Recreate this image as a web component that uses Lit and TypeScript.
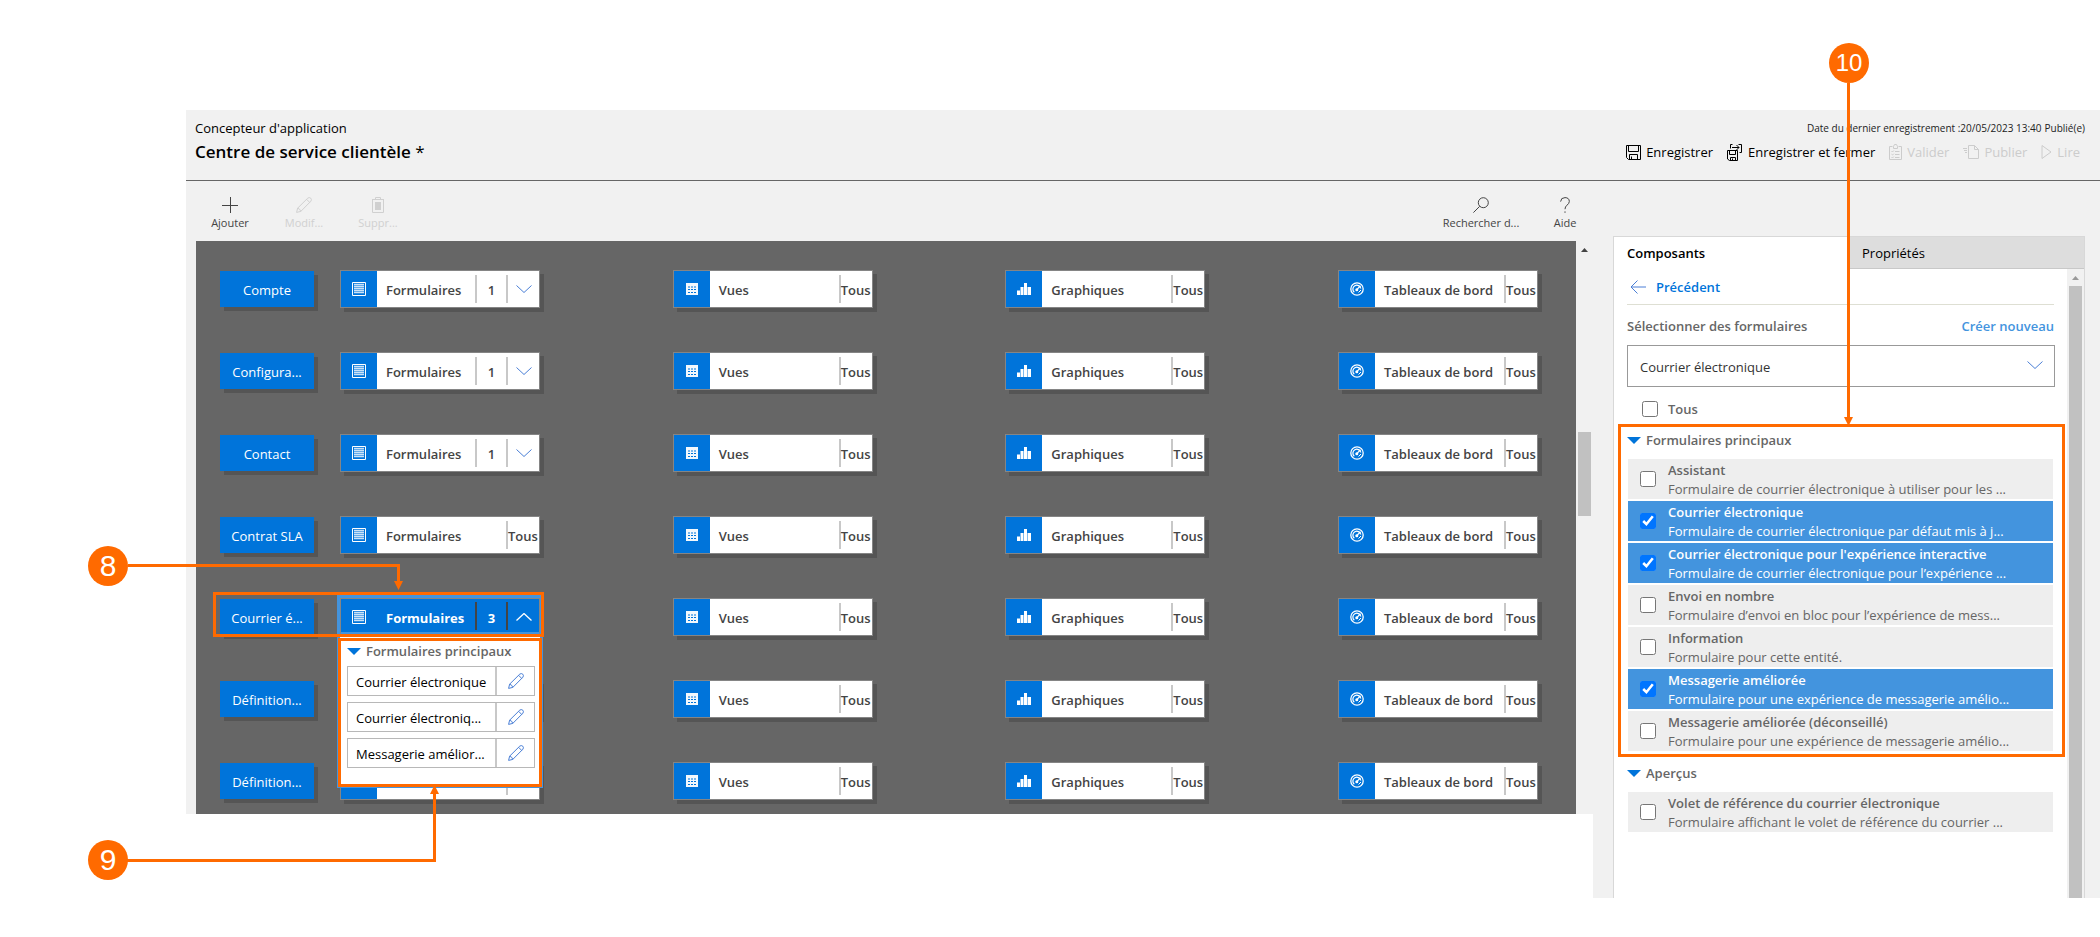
import { LitElement, html, svg, css, nothing } from "lit";
import { customElement } from "lit/decorators.js";
import { classMap } from "lit/directives/class-map.js";

const icon = (w: number, h: number, body: unknown) =>
  html`<svg width=${w} height=${h} viewBox="0 0 ${w} ${h}" fill="none" stroke="currentColor" aria-hidden="true">${body}</svg>`;

const icons = {
  plus: () => icon(16, 16, svg`<path d="M8.5 0V16M0 8.5H16"/>`),
  pencil: () => icon(16, 16, svg`<path d="M.6 15.4L1.6 11.2 11.8 1.1Q13.3 0 14.8 1.2 16 2.7 14.9 4.2L4.8 14.4ZM10.6 2.3L13.7 5.4M1.6 11.2Q4 11.6 4.8 14.4"/>`),
  trash: () => icon(16, 16, svg`<path d="M2 2.5H14M5.500 2.500V.5H10.500V2.500M2.500 2.500V15.500H13.500V2.500"/><path d="M5 5H11V13H5Z" fill="currentColor" stroke="none"/>`),
  search: () => icon(16, 16, svg`<circle cx="10.3" cy="5.7" r="5"/><path d="M6.7 9.3L.4 15.6"/>`),
  help: () => icon(16, 16, svg`<path d="M3.600 4.600Q3.800 .6 8 .6 12.300 .7 12.300 4.500 12.200 6.500 10 8.200 8 9.700 8 12.200M8 14.400V15.800"/>`),
  save: () => icon(15, 15, svg`<path d="M.5 .5H14.500V14.500H2.500L.5 12.500ZM2.500 .5V6.500H12.500V.5M3.500 14.500V9.500H11.500V14.500M5.500 11.500V14.500"/>`),
  saveClose: () => icon(16, 17, svg`<path d="M.5 6.500H10.500V16.500H2.500L.5 15ZM2.500 6.500V10.500H8.500V6.500M3.500 16.500V13.500H8.500V16.500M5.500 14.500V16.500M3.500 4.500V.5H5.500M11.500 .5H14.500V8.500H12.500M5 3.500H12M9.500 1L12 3.500 9.500 6"/>`),
  validate: () => icon(13, 16, svg`<path d="M3.500 2.500H.5V15.500H12.500V2.500H9.500M4.500 4.500V2.500L5.500 .5H7.500L8.500 2.500V4.500ZM2.500 7L3.500 8 4.800 6.500M6 7.500H10.500M2.500 10.200L3.500 11 4.800 9.700M6 10.500H10.500M2.500 13L3.500 14 4.800 12.600M6 13.500H10.500"/>`),
  publish: () => icon(16, 16, svg`<path d="M5.500 1.500H11.500L15.500 5.500V14.500H5.500ZM11.500 1.500V5.500H15.500M0 4.500H4M1 6.500H4M2 8.500H4"/>`),
  play: () => icon(11, 16, svg`<path d="M1 1.500L10 8 1 14.500Z"/>`),
  chevron: () => icon(16, 8, svg`<path d="M.5 .5L8 7.500 15.500 .5"/>`),
  chevronUp: () => icon(16, 8, svg`<path d="M.5 7.500L8 .5 15.500 7.500" stroke-width="1.300"/>`),
  back: () => icon(16, 14, svg`<path d="M7.500 .5L1 7 7.500 13.500M1 7H16"/>`),
  form: () => icon(14, 14, svg`<path d="M.5 .5H13.500V13.500H.5Z"/><path d="M2 2.500H12M2 4.500H12M2 6.500H12M2 8.500H12M2 10.500H12" stroke-width="1.400" opacity=".8"/>`),
  view: () => icon(12, 12, svg`<path d="M0 0H12V12H0Z" fill="currentColor" stroke="none" opacity=".95"/><path d="M2 4H4M5 4H7M8 4H10M2 6.500H4M5 6.500H7M8 6.500H10M2 9.500H4M5 9.500H7M8 9.500H10" stroke="#0074da"/>`),
  chart: () => icon(14, 12, svg`<path d="M0 7.500H3V12H0ZM3.500 4H6.500V12H3.500ZM7 0H10V12H7ZM10.500 4H14V12H10.500Z" fill="currentColor" stroke="none"/>`),
  gauge: () => icon(14, 14, svg`<circle cx="7" cy="7" r="6.200" stroke-width="1.300"/><path d="M4.300 10.300A4 4 0 1 1 10.800 6.500" stroke-width="1.200"/><path d="M6.800 7.600L10.500 3.700" stroke-width="1.300"/><circle cx="6.800" cy="7.700" r="1.500" fill="currentColor" stroke="none"/><path d="M8.500 10.500L11 8"/>`),
  caret: () => icon(14, 7, svg`<path d="M0 0H14L7 7Z" fill="#0074da" stroke="none"/>`),
  scrollUp: () => icon(7, 4, svg`<path d="M0 4H7L3.500 0Z" fill="currentColor" stroke="none"/>`),
};

interface Entity {
  name: string;
  count?: number;
  open?: string[];
}

const entities: Entity[] = [
  { name: "Compte", count: 1 },
  { name: "Configura...", count: 1 },
  { name: "Contact", count: 1 },
  { name: "Contrat SLA" },
  { name: "Courrier é...", count: 3, open: ["Courrier électronique", "Courrier électroniq...", "Messagerie amélior..."] },
  { name: "Définition..." },
  { name: "Définition..." },
];

interface FormItem {
  title: string;
  text: string;
  checked?: boolean;
}

const mainForms: FormItem[] = [
  { title: "Assistant", text: "Formulaire de courrier électronique à utiliser pour les ..." },
  { title: "Courrier électronique", text: "Formulaire de courrier électronique par défaut mis à j...", checked: true },
  { title: "Courrier électronique pour l'expérience interactive", text: "Formulaire de courrier électronique pour l’expérience ...", checked: true },
  { title: "Envoi en nombre", text: "Formulaire d’envoi en bloc pour l’expérience de mess..." },
  { title: "Information", text: "Formulaire pour cette entité." },
  { title: "Messagerie améliorée", text: "Formulaire pour une expérience de messagerie amélio...", checked: true },
  { title: "Messagerie améliorée (déconseillé)", text: "Formulaire pour une expérience de messagerie amélio..." },
];

const previewForms: FormItem[] = [
  { title: "Volet de référence du courrier électronique", text: "Formulaire affichant le volet de référence du courrier ..." },
];

const shared = css`
  * { box-sizing: border-box; }
  svg { display: block; flex: none; }
  button, select, input {
    font: inherit;
    color: inherit;
    margin: 0;
    padding: 0;
    border: 0;
    background: none;
  }
  .frame {
    position: absolute;
    border: 3px solid #ff6a00;
    pointer-events: none;
    z-index: 3;
  }
  .link {
    position: absolute;
    z-index: 4;
    color: #ff6a00;
    pointer-events: none;
  }
  .badge {
    position: absolute;
    z-index: 4;
    width: 40px;
    height: 40px;
    border-radius: 50%;
    background: #ff6a00;
    color: #fff;
    font: 30px/40px "Liberation Sans", Arial, sans-serif;
    text-align: center;
  }
`;

@customElement("designer-canvas")
export class DesignerCanvas extends LitElement {
  static styles = [shared, css`
    :host {
      display: flex;
      flex-direction: column;
      gap: 44px;
      flex: 1;
      min-width: 0;
      padding: 29px 38px 14px 24px;
      background: #666;
    }
    .row { display: flex; align-items: center; gap: 26px; position: relative; }
    .row.open { z-index: 2; }
    .entity {
      width: 94px;
      height: 36px;
      padding-top: 2px;
      background: #0074da;
      color: #fff;
      box-shadow: 4px 4px #555;
      flex: none;
    }
    .cards { display: flex; justify-content: space-between; flex: 1; }
    .cell { position: relative; }
    .card {
      display: flex;
      align-items: center;
      width: 200px;
      height: 38px;
      border: 1px solid #858585;
      background: #fff;
      color: #444;
      font-weight: 600;
      box-shadow: 4px 4px #555;
    }
    .glyph {
      display: flex;
      align-items: center;
      justify-content: center;
      width: 36px;
      height: 36px;
      background: #0074da;
      color: #fff;
    }
    .name { flex: 1; padding: 2px 0 0 9px; white-space: nowrap; }
    .all, .count, .more {
      display: flex;
      align-items: center;
      height: 28px;
      border-left: 2px solid #c8c8c8;
    }
    .all { width: 33px; padding-top: 2px; white-space: nowrap; }
    .count { width: 31px; padding-top: 2px; justify-content: center; }
    .more { width: 33px; justify-content: center; color: #4a7fd6; }
    .open .selected {
      background: #0074da;
      color: #fff;
      font-weight: 700;
      border-bottom: 4px solid #4394de;
      box-shadow: 0 0 0 3px #4394de;
    }
    .open .selected .glyph { height: 33px; padding-top: 3px; }
    .open .selected .name, .open .selected .count { padding-top: 4px; }
    .open .selected .more { padding-top: 2px; }
    .open .selected .count, .open .selected .more { border-color: #444; color: #fff; }
    .menu {
      position: absolute;
      top: 38px;
      left: -3px;
      width: 206px;
      padding: 7px 5px 18px 7px;
      border: solid #4394de;
      border-width: 0 3px 2px;
      background: #fff;
      color: #666;
    }
    .head { display: flex; align-items: center; gap: 5px; height: 16px; margin-bottom: 7px; font-weight: 600; }
    .list { display: flex; flex-direction: column; gap: 6px; }
    .item {
      display: flex;
      height: 30px;
      border: 1px solid #b8b8b8;
      color: #000;
    }
    .label { flex: 1; padding-left: 8px; line-height: 30px; white-space: nowrap; overflow: hidden; }
    .edit {
      width: 39px;
      border-left: 2px solid #c8c8c8;
      color: #4a7fd6;
      display: flex;
      align-items: center;
      justify-content: center;
    }
    .frame-row { left: -7px; top: -6px; width: 331px; height: 45px; }
    .frame-menu { left: -2px; right: -2px; top: 2px; bottom: -1px; }
    .badge-row { left: -132px; top: -52px; }
    .link-row { left: -92px; top: -34px; }
    .badge-menu { left: -252px; top: 204px; }
    .link-menu { left: -213px; top: 149px; }
  `];

  private card(label: string, glyph: () => unknown, e?: Entity) {
    const open = !!e?.open;
    return html`
      <div class="cell">
        <div class=${classMap({ card: true, selected: open })}>
          <span class="glyph">${glyph()}</span>
          <span class="name">${label}</span>
          ${e?.count
            ? html`<span class="count">${e.count}</span>
                <button class="more" aria-label="Développer" aria-expanded=${open}>${open ? icons.chevronUp() : icons.chevron()}</button>`
            : html`<span class="all">Tous</span>`}
        </div>
        ${e?.open ? this.menu(e.open) : nothing}
      </div>`;
  }

  private menu(items: string[]) {
    return html`
      <div class="menu">
        <div class="head">${icons.caret()}<span>Formulaires principaux</span></div>
        <div class="list">
          ${items.map((t) => html`<div class="item"><span class="label">${t}</span><button class="edit" aria-label="Modifier">${icons.pencil()}</button></div>`)}
        </div>
        <div class="frame frame-menu"></div>
        <svg class="link link-menu" width="312" height="80" viewBox="0 0 312 80">
          <path d="M0 75.500H307.500V6" fill="none" stroke="currentColor" stroke-width="3"/>
          <path d="M303 9H312L307.500 0Z" fill="currentColor"/>
        </svg>
        <div class="badge badge-menu">9</div>
      </div>`;
  }

  render() {
    return entities.map((e) => html`
      <div class=${classMap({ row: true, open: !!e.open })}>
        <button class="entity">${e.name}</button>
        <div class="cards">
          ${this.card("Formulaires", icons.form, e)}
          ${this.card("Vues", icons.view)}
          ${this.card("Graphiques", icons.chart)}
          ${this.card("Tableaux de bord", icons.gauge)}
        </div>
        ${e.open
          ? html`<div class="frame frame-row"></div>
              <svg class="link link-row" width="276" height="28" viewBox="0 0 276 28">
                <path d="M0 1.500H270.500V20" fill="none" stroke="currentColor" stroke-width="3"/>
                <path d="M266 17H275L270.500 26Z" fill="currentColor"/>
              </svg>
              <div class="badge badge-row">8</div>`
          : nothing}
      </div>`);
  }
}

@customElement("component-panel")
export class ComponentPanel extends LitElement {
  static styles = [shared, css`
    :host {
      display: flex;
      flex-direction: column;
      border: 1px solid #d8d8d8;
      border-bottom: 0;
      background: #fff;
      min-height: 662px;
      color: #666;
    }
    .tabs { display: flex; height: 32px; }
    .tab { flex: 1; text-align: left; padding: 0 13px; color: #000; }
    .tab.off { background: #ddd; border-bottom: 1px solid #c8c8c8; }
    .tab.on { font-weight: 600; }
    .main { display: flex; flex: 1; }
    .content { flex: 1; min-width: 0; padding: 0 13px; }
    .bar { width: 17px; padding: 7px 2px 0; background: #f1f1f1; color: #999; display: flex; flex-direction: column; align-items: center; gap: 6px; }
    .thumb { flex: 1; width: 13px; background: #c1c1c1; }
    .back {
      display: flex;
      align-items: center;
      gap: 10px;
      width: 100%;
      height: 36px;
      padding-left: 3px;
      border-bottom: 1px solid #dedfd3;
      color: #4a7fd6;
      font-weight: 600;
    }
    .back span { color: #0074da; }
    .title { display: flex; justify-content: space-between; align-items: center; height: 40px; padding-top: 2px; font-weight: 600; }
    .new { color: #4394de; text-decoration: none; }
    .pick { position: relative; display: block; color: #333; margin-right: -1px; }
    .pick select { appearance: none; width: 100%; height: 42px; border: 1px solid #999; border-radius: 0; padding: 2px 12px 0; background: #fff; }
    .pick svg { position: absolute; right: 12px; top: 16px; color: #4a7fd6; }
    input { width: 16px; height: 16px; flex: none; }
    .every { display: flex; align-items: center; gap: 10px; height: 44px; padding-left: 15px; font-weight: 600; }
    .group { position: relative; }
    .head { display: flex; align-items: center; gap: 5px; height: 28px; padding-bottom: 10px; font-weight: 600; }
    .group + .group { padding-top: 13px; }
    .list { display: flex; flex-direction: column; gap: 2px; padding: 0 1px; }
    .item { display: flex; align-items: center; gap: 12px; height: 40px; padding: 0 12px; background: #eee; }
    .item.checked { background: #4394de; color: #fff; }
    .text { display: flex; flex-direction: column; padding-top: 2px; line-height: 19px; white-space: nowrap; }
    .text b { font-weight: 600; }
    .frame-list { left: -9px; right: -11px; top: -7px; bottom: -6px; }
    .link-list { left: 217px; top: -348px; }
    .badge-list { left: 202px; top: -388px; font-size: 24px; }
  `];

  private items(list: FormItem[]) {
    return html`<div class="list">
      ${list.map((f) => html`
        <label class=${classMap({ item: true, checked: !!f.checked })}>
          <input type="checkbox" ?checked=${!!f.checked} />
          <span class="text"><b>${f.title}</b><span>${f.text}</span></span>
        </label>`)}
    </div>`;
  }

  render() {
    return html`
      <div class="tabs">
        <button class="tab on">Composants</button>
        <button class="tab off">Propriétés</button>
      </div>
      <div class="main">
        <div class="content">
          <button class="back">${icons.back()}<span>Précédent</span></button>
          <div class="title"><label for="entity">Sélectionner des formulaires</label><a class="new" href="#">Créer nouveau</a></div>
          <div class="pick">
            <select id="entity"><option>Courrier électronique</option></select>
            ${icons.chevron()}
          </div>
          <label class="every"><input type="checkbox" />Tous</label>
          <div class="group">
            <div class="head">${icons.caret()}<span>Formulaires principaux</span></div>
            ${this.items(mainForms)}
            <div class="frame frame-list"></div>
            <svg class="link link-list" width="9" height="343" viewBox="0 0 9 343">
              <path d="M4.500 0V336" fill="none" stroke="currentColor" stroke-width="3"/>
              <path d="M0 334H9L4.500 343Z" fill="currentColor"/>
            </svg>
            <div class="badge badge-list">10</div>
          </div>
          <div class="group">
            <div class="head">${icons.caret()}<span>Aperçus</span></div>
            ${this.items(previewForms)}
          </div>
        </div>
        <div class="bar">${icons.scrollUp()}<div class="thumb"></div></div>
      </div>`;
  }
}

@customElement("app-root")
export class AppRoot extends LitElement {
  static styles = [shared, css`
    :host {
      display: block;
      min-height: 100vh;
      padding: 110px 0 0 186px;
      box-sizing: border-box;
      background: #fff;
      color: #000;
      font: 13px/18px "Open Sans", "Noto Sans", sans-serif;
    }
    .header {
      display: flex;
      justify-content: space-between;
      height: 71px;
      padding: 8px 15px 0 9px;
      background: #f1f1f1;
      border-bottom: 1px solid #666;
    }
    .crumb { line-height: 20px; }
    h1 { margin: 0; font-size: 17px; line-height: 28px; font-weight: 600; }
    .dirty { font-weight: 400; }
    .right { display: flex; flex-direction: column; align-items: flex-end; }
    .saved { display: flex; gap: 3px; font-size: 10px; line-height: 20px; color: #222; }
    .actions { display: flex; gap: 14px; padding-right: 5px; }
    .action { display: flex; align-items: center; gap: 5px; height: 28px; }
    .action:disabled { color: #ccc; }
    .body { display: flex; align-items: flex-start; }
    .work { flex: 1; min-width: 0; padding-left: 10px; background: #f1f1f1; }
    .tools { display: flex; height: 60px; margin-left: -3px; }
    .tool {
      display: flex;
      flex-direction: column;
      align-items: center;
      gap: 2px;
      width: 74px;
      padding-top: 16px;
      font-size: 11px;
      line-height: 16px;
      color: #444;
    }
    .tool:disabled { color: #d0d0d0; }
    .tool.wide { width: 84px; }
    .tool.first { margin-left: auto; }
    .tool.last { margin-right: -14px; }
    .stage { display: flex; }
    .bar { width: 17px; padding-top: 7px; display: flex; flex-direction: column; align-items: center; color: #444; }
    .thumb { width: 13px; height: 84px; margin-top: 180px; background: #c1c1c1; }
    .side { width: 507px; padding: 55px 15px 0 20px; background: #f1f1f1; }
  `];

  render() {
    return html`
      <header class="header">
        <div>
          <div class="crumb">Concepteur d'application</div>
          <h1>Centre de service clientèle <span class="dirty">*</span></h1>
        </div>
        <div class="right">
          <div class="saved"><span>Date du dernier enregistrement :20/05/2023 13:40</span><span>Publié(e)</span></div>
          <div class="actions">
            <button class="action">${icons.save()}Enregistrer</button>
            <button class="action">${icons.saveClose()}Enregistrer et fermer</button>
            <button class="action" disabled>${icons.validate()}Valider</button>
            <button class="action" disabled>${icons.publish()}Publier</button>
            <button class="action" disabled>${icons.play()}Lire</button>
          </div>
        </div>
      </header>
      <div class="body">
        <main class="work">
          <div class="tools">
            <button class="tool">${icons.plus()}Ajouter</button>
            <button class="tool" disabled>${icons.pencil()}Modif...</button>
            <button class="tool" disabled>${icons.trash()}Suppr...</button>
            <button class="tool wide first">${icons.search()}Rechercher d...</button>
            <button class="tool wide last">${icons.help()}Aide</button>
          </div>
          <div class="stage">
            <designer-canvas></designer-canvas>
            <div class="bar">${icons.scrollUp()}<div class="thumb"></div></div>
          </div>
        </main>
        <aside class="side"><component-panel></component-panel></aside>
      </div>`;
  }
}
